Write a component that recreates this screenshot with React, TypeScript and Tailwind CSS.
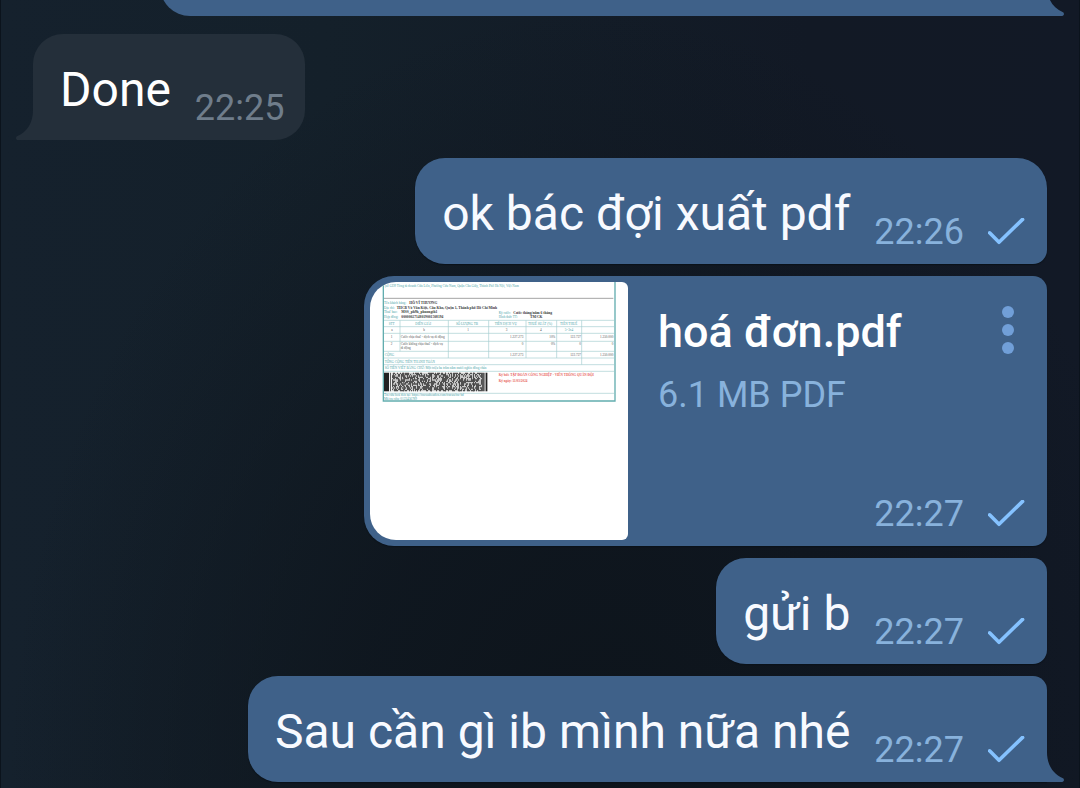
import React from 'react';
import clsx from 'clsx';

interface Message {
  id: number;
  text: string;
  time: string;
  corners: string;
  tail?: boolean;
}

const outgoing: Message[] = [
  { id: 1, text: 'ok bác đợi xuất pdf', time: '22:26', corners: 'rounded-l-[30px] rounded-tr-[30px] rounded-br-[14px]' },
  { id: 3, text: 'gửi b', time: '22:27', corners: 'rounded-l-[30px] rounded-r-[14px]' },
  { id: 4, text: 'Sau cần gì ib mình nữa nhé', time: '22:27', corners: 'rounded-l-[30px] rounded-tr-[14px]', tail: true },
];

function Tail({ side }: { side: 'left' | 'right' }) {
  return (
    <svg
      viewBox="0 0 18 30"
      aria-hidden="true"
      className={clsx(
        'absolute bottom-0 h-[30px] w-[18px] fill-current',
        side === 'left' ? 'right-full text-[#242f3a]' : 'left-full -scale-x-100 text-[#3f6189]'
      )}
    >
      <path d="M18 0C18 13 12 22 2 26.2C0.6 26.9 0.6 30 3 30H18Z" />
    </svg>
  );
}

function SentTime({ time }: { time: string }) {
  return (
    <div className="flex shrink-0 items-center gap-6 text-[36px] leading-[42px] text-[#88b2dc]">
      <time>{time}</time>
      <svg viewBox="0 0 37 28" role="img" aria-label="Sent" className="h-7 w-[37px] shrink-0">
        <path d="M1.6 14.8L11 24.3L34.6 1.4" fill="none" stroke="#85c2ff" strokeWidth="3.6" strokeLinecap="round" strokeLinejoin="round" />
      </svg>
    </div>
  );
}

function OutgoingBubble({ message }: { message: Message }) {
  return (
    <div
      className={clsx(
        'relative flex items-end gap-6 self-end bg-[#3f6189] pt-7 pr-[22px] pb-[11px] pl-[27px] shadow-[0_1px_1px_#0b121a]',
        message.corners
      )}
    >
      <p className="mb-[11px] text-[48px] leading-[56px] text-[#f8faff]">{message.text}</p>
      <SentTime time={message.time} />
      {message.tail && <Tail side="right" />}
    </div>
  );
}

// Stacked barcode cells, seeded so every render is the same
function barcodePath() {
  let seed = 7;
  let d = '';
  for (let row = 0; row < 14; row++) {
    for (let col = 0; col < 90; col++) {
      seed = (seed * 1103515245 + 12345) % 2147483648;
      if (seed / 2147483648 < 0.56) {
        d += `M${66 + col * 3} ${272 + row * 4}h3v4h-3z`;
      }
    }
  }
  return d;
}

const BARCODE = barcodePath();

function InvoicePreview() {
  return (
    <svg
      viewBox="0 0 774 774"
      role="img"
      aria-label="hoá đơn.pdf"
      className="aspect-square w-[258px] shrink-0 rounded-l-[26px] rounded-r-md bg-white font-['Liberation_Serif',serif]"
    >
      {/* Sheet frame */}
      <g fill="none" stroke="#62adaf" strokeWidth="4">
        <path d="M40 0V357H735V0" />
      </g>
      <path d="M42 49H730" stroke="#777" strokeWidth="2" />

      {/* Table rules */}
      <g fill="none" stroke="#a5cdd0" strokeWidth="2">
        <path d="M42 115H732M42 134H732M42 154H732M42 178H732M42 208H732M42 228H732M42 248H732M42 268H732M42 334H732" />
        <path d="M90 115V208M235 115V228M356 115V228M468 115V228M560 115V228M635 115V248" />
      </g>

      <g fontSize="10" fill="#4a9fa8">
        <text x="44" y="16">(số GD9 Tòng tù doanh Cửu Liên, Phường Cửu Nam, Quận Cầu Giấy, Thành Phố Hà Nội, Việt Nam</text>
        <text x="42" y="66">Tên khách hàng:</text>
        <text x="42" y="80">Địa chỉ:</text>
        <text x="42" y="94">Thuê bao:</text>
        <text x="42" y="109">Hợp đồng:</text>
        <text x="386" y="95">Kỳ cước:</text>
        <text x="386" y="109">Hình thức TT:</text>
        <text x="56" y="128">STT</text>
        <text x="136" y="128">DIỄN GIẢI</text>
        <text x="258" y="128">SỐ LƯỢNG TB</text>
        <text x="374" y="128">TIỀN DỊCH VỤ</text>
        <text x="474" y="128">THUẾ SUẤT (%)</text>
        <text x="570" y="128">TIỀN THUẾ</text>
        <text x="584" y="148">5=3x4</text>
        <text x="44" y="222">CỘNG</text>
        <text x="44" y="242">TỔNG CỘNG TIỀN THANH TOÁN</text>
        <text x="44" y="262">SỐ TIỀN VIẾT BẰNG CHỮ: Một triệu ba trăm năm mươi nghìn đồng chẵn</text>
        <text x="42" y="343">Tra cứu hoá đơn tại: https://tracuuhoadon.com/tracuu/tra-hd</text>
        <text x="42" y="354">Mã tra cứu: 0123456789</text>
      </g>

      <g fontSize="11" fontWeight="700" fill="#383838">
        <text x="118" y="66">HỒ VĨ THƯƠNG</text>
        <text x="80" y="80">THCB Võ Văn Kiệt, Cầu Kho, Quận 1, Thành phố Hồ Chí Minh</text>
        <text x="94" y="94">MSS_ph9h_phuongth1</text>
        <text x="94" y="109">00000027148019001508194</text>
        <text x="430" y="95">Cước tháng/năm 6 tháng</text>
        <text x="480" y="109">TM/CK</text>
      </g>

      <g fontSize="10" fill="#555">
        <text x="64" y="148">a</text>
        <text x="160" y="148">b</text>
        <text x="292" y="148">1</text>
        <text x="407" y="148">3</text>
        <text x="510" y="148">4</text>
        <text x="62" y="169">1</text>
        <text x="92" y="169">Cước chịu thuế - dịch vụ di động</text>
        <text x="62" y="188">2</text>
        <text x="92" y="188">Cước không chịu thuế - dịch vụ</text>
        <text x="92" y="201">di động</text>
        <g textAnchor="end">
          <text x="460" y="169">1.227.273</text>
          <text x="556" y="169">10%</text>
          <text x="633" y="169">122.727</text>
          <text x="730" y="169">1.350.000</text>
          <text x="460" y="188">0</text>
          <text x="556" y="188">0%</text>
          <text x="633" y="188">0</text>
          <text x="730" y="188">0</text>
          <text x="460" y="221">1.227.273</text>
          <text x="633" y="221">122.727</text>
          <text x="730" y="221">1.350.000</text>
        </g>
      </g>

      <g fontSize="10" fontWeight="700" fill="#e8605a">
        <text x="386" y="282">Ký bởi: TẬP ĐOÀN CÔNG NGHIỆP - VIỄN THÔNG QUÂN ĐỘI</text>
        <text x="386" y="301">Ký ngày: 11/03/2024</text>
      </g>

      {/* Barcode */}
      <path d="M42 272h310v56h-310z" fill="#c9c9c9" />
      <path d="M57 272h3v56h-3zM62 272h4v56h-4zM346 272h2v56h-2z" fill="#eee" />
      <path d="M42 272h15v56h-15zM60 272h2v56h-2zM337 272h4v56h-4zM344 272h2v56h-2zM348 272h4v56h-4z" fill="#222" />
      <path d="M100 272h3v56h-3zM141 272h3v56h-3zM183 272h3v56h-3zM225 272h3v56h-3zM267 272h3v56h-3zM309 272h3v56h-3z" fill="#444" />
      <path d={BARCODE} fill="#505050" />
    </svg>
  );
}

function FileBubble() {
  return (
    <div className="flex w-[683px] max-w-full gap-[30px] self-end rounded-l-[30px] rounded-r-[14px] bg-[#3f6189] p-1.5 shadow-[0_1px_1px_#0b121a]">
      <InvoicePreview />
      <div className="flex min-w-0 flex-1 flex-col pt-6">
        <div className="flex items-start justify-between">
          <div>
            <h2 className="text-[45px] leading-[52px] font-medium text-white">hoá đơn.pdf</h2>
            <p className="mt-4 text-[36px] leading-[42px] text-[#88b2dc]">6.1 MB PDF</p>
          </div>
          <button type="button" aria-label="File options" className="mr-[27px] flex flex-col gap-1.5">
            <span className="size-3 rounded-full bg-[#719fd8]" />
            <span className="size-3 rounded-full bg-[#719fd8]" />
            <span className="size-3 rounded-full bg-[#719fd8]" />
          </button>
        </div>
        <div className="mt-auto mr-4 mb-[5px] self-end">
          <SentTime time="22:27" />
        </div>
      </div>
    </div>
  );
}

export default function App() {
  return (
    <main className="flex h-screen flex-col justify-end gap-3 overflow-hidden border-x border-[#0b131c] bg-[radial-gradient(ellipse_at_55%_100%,#0d141b_0%,#0e151dcc_30%,transparent_70%),linear-gradient(to_right,#15212d,#14202a_30%,#121925_75%,#121926)] px-8 pb-1.5 font-[Roboto,sans-serif]">
      {/* Previous message, scrolled almost out of view */}
      <div className="relative h-[106px] w-7/8 shrink-0 self-end rounded-l-[30px] bg-[#3f6189]">
        <Tail side="right" />
      </div>

      <div className="relative my-1.5 flex items-end gap-6 self-start rounded-t-[30px] rounded-br-[30px] bg-[#242f3a] pt-7 pr-5 pb-[11px] pl-[27px]">
        <p className="mb-[11px] text-[48px] leading-[56px] text-white">Done</p>
        <time className="text-[36px] leading-[42px] text-[#6f7d8b]">22:25</time>
        <Tail side="left" />
      </div>

      <OutgoingBubble message={outgoing[0]} />
      <FileBubble />
      <OutgoingBubble message={outgoing[1]} />
      <OutgoingBubble message={outgoing[2]} />
    </main>
  );
}
